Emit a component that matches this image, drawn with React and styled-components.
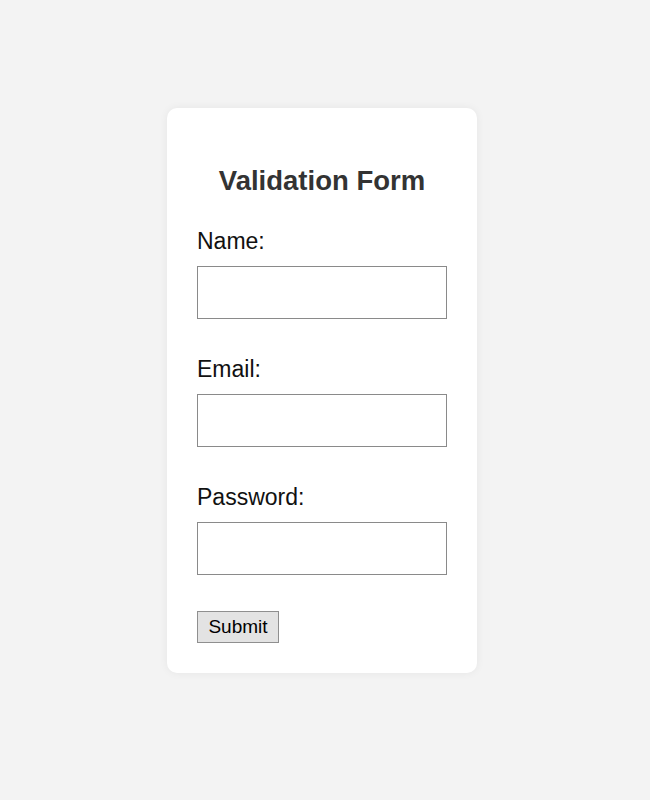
import React from "react";
import styled, { createGlobalStyle } from "styled-components";

const GlobalStyle = createGlobalStyle`
  html, body {
    margin: 0;
    padding: 0;
    background: #f3f3f3;
    font-family: "Liberation Sans", Arial, sans-serif;
  }
`;

function App() {
  return (
    <>
      <GlobalStyle />
      <Page>
        <Card>
          <Title>Validation Form</Title>
          <Group>
            <Label>Name:</Label>
            <Input type="text" />
          </Group>
          <Group>
            <Label>Email:</Label>
            <Input type="email" />
          </Group>
          <Group>
            <Label>Password:</Label>
            <Input type="password" />
          </Group>
          <Submit>Submit</Submit>
        </Card>
      </Page>
    </>
  );
}

export default App;

const Page = styled.div`
  min-height: 800px;
  box-sizing: border-box;
  display: flex;
  justify-content: center;
  align-items: flex-start;
  padding: 108px 6px 0 0;
`;

const Card = styled.form`
  width: 310px;
  box-sizing: border-box;
  padding: 30px;
  background: #ffffff;
  border-radius: 10px;
  box-shadow: 0 0 8px rgba(0, 0, 0, 0.06);
  display: flex;
  flex-direction: column;
  align-items: flex-start;
`;

const Title = styled.h2`
  align-self: stretch;
  margin: 27px 0 31px 0;
  font-size: 27.5px;
  line-height: 32px;
  font-weight: bold;
  text-align: center;
  color: #333333;
`;

const Group = styled.div`
  display: flex;
  flex-direction: column;
  margin: 0 0 37px 0;

  &:last-of-type {
    margin-bottom: 36px;
  }
`;

const Label = styled.label`
  font-size: 23px;
  line-height: 26px;
  color: #111111;
  margin: 0 0 12px 0;
`;

const Input = styled.input`
  width: 250px;
  height: 53px;
  box-sizing: border-box;
  border: 1px solid #8a8a8a;
  border-radius: 0;
  padding: 4px 6px;
  font-size: 18px;
  font-family: "Liberation Sans", Arial, sans-serif;
  background: #ffffff;
`;

const Submit = styled.button`
  width: 82px;
  height: 32px;
  box-sizing: border-box;
  padding: 0;
  border: 1px solid #8f8f8f;
  border-radius: 0;
  background: #e3e3e3;
  color: #000000;
  font-size: 19px;
  font-family: "Liberation Sans", Arial, sans-serif;
`;
